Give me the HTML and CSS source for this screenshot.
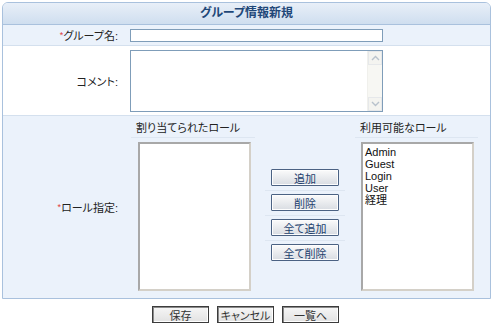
FILE: index.html
```html
<!DOCTYPE html>
<html lang="ja">
<head>
    <meta charset="UTF-8">
    <title>グループ情報新規</title>
    <link rel="stylesheet" href="styles.css">
</head>
<body>
    <div class="panel">
        <div class="panel-head">グループ情報新規</div>

        <div class="row row-alt">
            <div class="label"><span><span class="req">*</span>グループ名:</span></div>
            <div class="field">
                <input type="text" class="name-input">
            </div>
        </div>

        <div class="row">
            <div class="label"><span>コメント:</span></div>
            <div class="field">
                <div class="comment">
                    <textarea class="comment-text"></textarea>
                    <div class="scroll">
                        <div class="scroll-btn">
                            <svg width="9" height="6" viewBox="0 0 9 6"><path d="M1 5 L4.5 1.5 L8 5" fill="none" stroke="#b8c2cc" stroke-width="1.4"/></svg>
                        </div>
                        <div class="scroll-track"></div>
                        <div class="scroll-btn">
                            <svg width="9" height="6" viewBox="0 0 9 6"><path d="M1 1 L4.5 4.5 L8 1" fill="none" stroke="#b8c2cc" stroke-width="1.4"/></svg>
                        </div>
                    </div>
                </div>
            </div>
        </div>

        <div class="row row-alt row-last">
            <div class="label"><span><span class="req">*</span>ロール指定:</span></div>
            <div class="field">
                <div class="roles">
                    <div class="role-col role-left">
                        <div class="role-head">割り当てられたロール</div>
                        <ul class="listbox"></ul>
                    </div>
                    <div class="role-actions">
                        <div class="action"><button class="btn">追加</button></div>
                        <div class="action"><button class="btn">削除</button></div>
                        <div class="action"><button class="btn">全て追加</button></div>
                        <div class="action"><button class="btn">全て削除</button></div>
                    </div>
                    <div class="role-col role-right">
                        <div class="role-head">利用可能なロール</div>
                        <ul class="listbox">
                            <li>Admin</li>
                            <li>Guest</li>
                            <li>Login</li>
                            <li>User</li>
                            <li>経理</li>
                        </ul>
                    </div>
                </div>
            </div>
        </div>
    </div>

    <div class="footer">
        <button class="btn-main">保存</button>
        <button class="btn-main">キャンセル</button>
        <button class="btn-main">一覧へ</button>
    </div>
</body>
</html>
```

FILE: styles.css
```css
body {
    margin: 0;
    background: #fff;
    font-family: "Liberation Sans", "Noto Sans CJK JP", sans-serif;
    font-size: 11px;
    color: #222;
    font-feature-settings: "palt";
}

.panel {
    margin: 2px 3px 0 2px;
    border: 1px solid #a9c1dd;
    border-radius: 6px 6px 0 0;
    background: #fff;
}

.panel-head {
    height: 21px;
    line-height: 21px;
    text-align: center;
    font-size: 12px;
    font-weight: bold;
    color: #1f4778;
    background: linear-gradient(#e8eff8, #cfdeef);
    border-bottom: 1px solid #a9c1dd;
    border-radius: 5px 5px 0 0;
}

.row {
    display: grid;
    grid-template-columns: 119px 1fr;
    border-bottom: 1px solid #d4e0ee;
}

.row-alt {
    background: #ebf2fb;
}

.row-last {
    border-bottom: none;
}

.label {
    display: flex;
    align-items: center;
    justify-content: flex-end;
    padding-right: 4px;
    white-space: nowrap;
}

.req {
    color: #e03a3a;
    font-size: 9px;
    vertical-align: 2px;
}

.field {
    padding: 4px 0 3px 8px;
}

.name-input {
    display: block;
    box-sizing: border-box;
    width: 253px;
    height: 13px;
    margin: 0;
    padding: 0 2px;
    border: 1px solid #7f9db9;
    background: #fff;
}

.comment {
    display: flex;
    box-sizing: border-box;
    width: 253px;
    height: 62px;
    border: 1px solid #7f9db9;
    background: #fff;
}

.comment-text {
    flex: 1;
    margin: 0;
    padding: 2px;
    border: none;
    resize: none;
    outline: none;
    overflow: hidden;
    font: inherit;
}

.scroll {
    display: flex;
    flex-direction: column;
    width: 14px;
    background: #f7f7f3;
    border-left: 1px solid #f0f0ec;
}

.scroll-btn {
    height: 14px;
    display: flex;
    align-items: center;
    justify-content: center;
    background: #f4f4f0;
    border: 1px solid #e6e8ea;
    box-sizing: border-box;
}

.scroll-track {
    flex: 1;
}

.roles {
    display: flex;
}

.role-col {
    display: flex;
    flex-direction: column;
}

.role-left {
    width: 124px;
    margin-left: 1px;
}

.role-right {
    width: 123px;
}

.role-head {
    height: 17px;
    line-height: 17px;
    padding-left: 5px;
    border-bottom: 1px solid #dde6f1;
    white-space: nowrap;
}

.listbox {
    list-style: none;
    box-sizing: border-box;
    width: 113px;
    height: 149px;
    margin: 4px 0 4px 7px;
    padding: 2px 2px;
    background: #fff;
    border: 2px solid #a8a8a8;
    border-right-color: #d4d0c8;
    border-bottom-color: #d4d0c8;
    font-size: 11px;
    line-height: 12px;
    color: #111;
}

.role-right .listbox {
    margin-left: 6px;
}

.role-actions {
    width: 80px;
    margin: 0 10px 0 10px;
    display: flex;
    flex-direction: column;
    justify-content: center;
    padding-top: 16px;
}

.action {
    padding: 3px 0 4px;
    border-bottom: 1px solid #dde6f1;
    text-align: center;
}

.action:last-child {
    border-bottom: none;
}

.btn {
    box-sizing: border-box;
    width: 68px;
    height: 17px;
    margin: 0;
    padding: 0;
    font: inherit;
    color: #22406d;
    border: 1px solid #4b6283;
    box-shadow: inset 0 0 0 1px #fdfdfd;
    background: linear-gradient(#fbfbfb, #d8dce2);
    border-radius: 1px;
}

.footer {
    display: flex;
    justify-content: center;
    gap: 8px;
    padding: 7px 0 0 0;
    margin-left: -3px;
}

.btn-main {
    box-sizing: border-box;
    width: 57px;
    height: 17px;
    margin: 0;
    padding: 0;
    font: inherit;
    color: #333;
    border: 1px solid #3c3c3c;
    box-shadow: inset 1px 1px 0 #8a8a8a, inset -1px -1px 0 #fff;
    background: linear-gradient(#f6f6f6, #e2e2e2);
}
```
